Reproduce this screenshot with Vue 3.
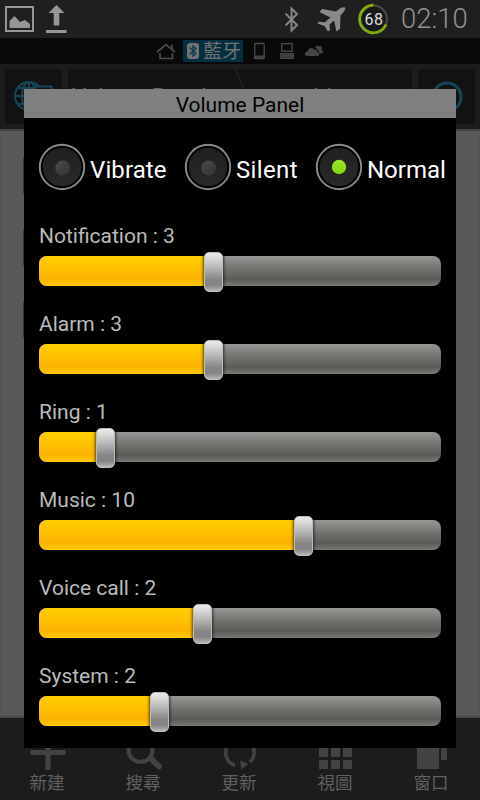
<script setup>
const modes = [
  { name: 'Vibrate', on: false },
  { name: 'Silent', on: false },
  { name: 'Normal', on: true }
]
const sliders = [
  { name: 'Notification', value: 3, pos: 174.5 },
  { name: 'Alarm', value: 3, pos: 174.5 },
  { name: 'Ring', value: 1, pos: 66.5 },
  { name: 'Music', value: 10, pos: 264.5 },
  { name: 'Voice call', value: 2, pos: 163.5 },
  { name: 'System', value: 2, pos: 120.5 }
]
</script>

<template>
  <div class="screen">
    <header class="status">
      <svg class="status-left" width="72" height="38" viewBox="0 0 72 38">
        <rect x="6" y="7" width="27" height="24" fill="none" stroke="#969696" stroke-width="2" />
        <path d="M9.500 28V21L14.500 16L20 22L25 20L30 24V28Z" fill="#969696" />
        <path d="M56.500 5L64.500 13H59.300V25.500H53.700V13H48.500Z" fill="#969696" />
        <rect x="46" y="30" width="20.500" height="3" fill="#969696" />
      </svg>
      <div class="status-right">
        <svg width="72" height="38" viewBox="280 0 72 38">
          <path d="M285.500 13.500L297 25L291.500 30.500V8.500L297 14L285.500 25.500" fill="none" stroke="#858585" stroke-width="2" />
          <path d="M345 7.500C343 6.500 340 8 336 11.500L322 9L319.500 12L330.500 17.500L324.500 22.500L319 21.500L317.500 23.500L324.500 26L328 31.500L330 30L329.500 24.500L334 20.500L336.500 31.500L340 29L340.500 15.500C344 12 346 9 345 7.500Z" fill="#8a8a8a" />
        </svg>
        <div class="battery">
          <svg width="32" height="38" viewBox="357 0 32 38">
            <circle cx="373.300" cy="19" r="13.600" fill="#191919" stroke="#4b4b50" stroke-width="2" />
            <path d="M373.500 5.200A13.800 13.800 0 1 0 386.100 24.500" fill="none" stroke="#80ad0c" stroke-width="2.800" />
          </svg>
          <span>68</span>
        </div>
        <time>02:10</time>
      </div>
    </header>

    <nav class="tabs">
      <svg width="20" height="26" viewBox="156 38 20 26">
        <path d="M157 52L166 44.500L175 52M172 49V44.500M160 53V58.500H172.500V53" fill="none" stroke="#4c4c4c" stroke-width="1.700" />
      </svg>
      <div class="tab-active">
        <svg width="12" height="16" viewBox="0 0 12 16">
          <rect width="12" height="16" rx="3" fill="#727272" />
          <path d="M2.500 4.500L9 10.500L6 13V3L9 5.500L2.500 11.500" fill="none" stroke="#04394d" stroke-width="1.200" />
        </svg>
        <span>藍牙</span>
      </div>
      <svg class="tab-devices" width="74" height="26" viewBox="252 38 74 26">
        <g fill="none" stroke="#4c4c4c" stroke-width="1.300">
          <rect x="254.700" y="43.500" width="9.500" height="15" rx="1" />
          <rect x="281.700" y="43.700" width="10.500" height="7.500" />
        </g>
        <path d="M254 55.500H265V59H254ZM280 53H294V59H280Z" fill="#454545" />
        <path d="M258.500 57.300H260.500M281.500 54.700H292.500M281.500 57.200H292.500" stroke="#252525" stroke-width="1" stroke-dasharray="1.500 1" />
        <path d="M307 56C304 56 304 52 307.500 51.500C308 48 312 47 314 49.500C318 49 317 53 319.500 53C319.500 56 318 56 316 56Z" fill="#454545" />
        <path d="M315.500 48C315 45.500 318 45 319 46.500C321 45 323 48 321.500 49.500C324 51.500 323 54 321 53.500C319 54 319 52 318 50Z" fill="#454545" />
      </svg>
    </nav>

    <div class="toolbar">
      <div class="tile">
        <svg width="57" height="55" viewBox="5 69 57 55">
          <g fill="none" stroke="#174657" stroke-width="2">
            <circle cx="29" cy="96" r="14" />
            <ellipse cx="29" cy="96" rx="7" ry="14" />
            <path d="M29 82V110M15 96H43M18 88H40M18 104H40" />
            <rect x="35" y="86.500" width="16.500" height="14" fill="#121212" />
          </g>
        </svg>
      </div>
      <div class="crumbs">
        <span>Volume Panel</span>
        <svg width="24" height="55" viewBox="0 0 24 55"><path d="M1 0L14 28L1 55" fill="none" stroke="#1e1e1e" stroke-width="2" /></svg>
        <span class="crumb-last">enable</span>
      </div>
      <div class="tile">
        <svg width="57" height="55" viewBox="418 69 57 55"><circle cx="447" cy="97" r="14" fill="none" stroke="#174657" stroke-width="3" /></svg>
      </div>
    </div>

    <main class="content">
      <i v-for="n in 3" :key="n" class="item"></i>
    </main>

    <footer class="actions">
      <div class="action">
        <svg width="40" height="34" viewBox="0 0 40 34"><path d="M20 0V34M2.500 16.500H37.500" stroke="#434343" stroke-width="5" /></svg>
        <span>新建</span>
      </div>
      <div class="action">
        <svg width="40" height="34" viewBox="0 0 40 34"><circle cx="16.500" cy="14" r="12" fill="none" stroke="#434343" stroke-width="4" /><path d="M27.500 23L35 30.500" stroke="#434343" stroke-width="6" stroke-linecap="round" /></svg>
        <span>搜尋</span>
      </div>
      <div class="action">
        <svg width="40" height="34" viewBox="0 0 40 34"><path d="M15 29.500A14 14 0 0 1 15 3M25 3A14 14 0 0 1 30 26" fill="none" stroke="#434343" stroke-width="3.500" /><path d="M20 24.500L28 28L21.500 33.500ZM19 -1L12 3L19 8Z" fill="#434343" /></svg>
        <span>更新</span>
      </div>
      <div class="action">
        <svg width="40" height="34" viewBox="0 0 40 34"><path d="M3 0H12V9H3ZM15 0H24V9H15ZM27 0H36V9H27ZM3 12H12V21H3ZM15 12H24V21H15ZM27 12H36V21H27ZM3 24H12V33H3ZM15 24H24V33H15ZM27 24H36V33H27Z" fill="#434343" /></svg>
        <span>視圖</span>
      </div>
      <div class="action">
        <svg width="40" height="34" viewBox="0 0 40 34"><path d="M5 4H27V33H5ZM29 0H35V24H29Z" fill="#434343" /></svg>
        <span>窗口</span>
      </div>
    </footer>

    <section class="dialog">
      <h1>Volume Panel</h1>
      <div class="modes">
        <label v-for="m in modes" :key="m.name" class="mode">
          <svg width="48" height="48" viewBox="0 0 48 48">
            <defs>
              <linearGradient id="face" x1="0" y1="0" x2="0" y2="1"><stop offset="0" stop-color="#202020" /><stop offset="1" stop-color="#292929" /></linearGradient>
              <linearGradient id="dot" x1="0" y1="0" x2="1" y2="1"><stop offset="0" stop-color="#4c4c4c" /><stop offset="1" stop-color="#333" /></linearGradient>
              <linearGradient id="lit" x1="0" y1="0" x2="0" y2="1"><stop offset="0" stop-color="#9be52e" /><stop offset="1" stop-color="#82d414" /></linearGradient>
            </defs>
            <circle cx="24" cy="24" r="22.200" fill="#000" stroke="#8b8b8b" stroke-width="1.900" />
            <circle cx="24" cy="24" r="19.300" fill="url(#face)" />
            <circle v-if="m.on" cx="24" cy="24" r="7.200" fill="url(#lit)" />
            <circle v-else cx="24.700" cy="25" r="7.400" fill="url(#dot)" />
          </svg>
          <span>{{ m.name }}</span>
        </label>
      </div>
      <div class="sliders">
        <div v-for="s in sliders" :key="s.name" class="slider">
          <div class="caption">{{ s.name }} : {{ s.value }}</div>
          <div class="track">
            <div class="fill" :style="{ width: s.pos + 'px' }"></div>
            <div class="thumb" :style="{ left: s.pos + 'px' }"></div>
          </div>
        </div>
      </div>
    </section>
  </div>
</template>

<style>
body { background: #1c1c1c; overflow: hidden; }
</style>

<style scoped>
* { box-sizing: border-box; }
svg { display: block; flex: none; }
.screen { position: relative; width: 480px; height: 800px; display: flex; flex-direction: column; font-family: Roboto, "Noto Sans CJK TC", sans-serif; overflow: hidden; }
.status { height: 38px; flex: none; display: flex; justify-content: space-between; background: #1f1f1f; }
.status-right { display: flex; align-items: center; padding-right: 12px; }
.battery { display: grid; margin: 0 12px 0 5px; align-items: center; justify-items: center; }
.battery svg, .battery span { grid-area: 1 / 1; }
.battery span { color: #ddd; font-size: 16px; letter-spacing: 0.6px; padding: 1px 0 0 2px; }
time { color: #929292; font-size: 27.500px; line-height: 38px; width: 67px; white-space: nowrap; font-weight: 300; }
.tabs { height: 26px; flex: none; display: flex; align-items: center; padding-left: 156px; background: #090909; }
.tab-active { height: 22px; width: 60px; margin-left: 7px; padding-left: 4px; display: flex; align-items: center; gap: 4px; background: #032f40; color: #727272; font-size: 19px; line-height: 22px; white-space: nowrap; }
.tab-active span { padding-top: 1px; }
.tab-devices { margin-left: 9px; }
.toolbar { height: 65px; flex: none; display: flex; gap: 6px; padding: 5px 5px 0; background: #1c1c1c; align-items: flex-start; }
.tile { width: 57px; height: 55px; background: #121212; border-radius: 3px; flex: none; }
.crumbs { flex: 1; height: 55px; background: #121212; border-radius: 3px; display: flex; align-items: center; color: #646464; font-size: 22px; overflow: hidden; padding-left: 4px; white-space: nowrap; }
.crumbs > span:first-child { width: 130px; }
.crumbs svg { margin-left: 32px; }
.crumb-last { margin-left: 20px; }
.content { flex: 1; background: #585858; display: flex; flex-direction: column; gap: 35px; padding: 28px 0 0 23px; box-shadow: inset 0 2px 1px #444, inset 0 -2px 1px #484848; }
.item { width: 30px; height: 37px; background: #263a44; border-radius: 2px; }
.actions { height: 82px; flex: none; display: grid; grid-template-columns: repeat(5, 96px); background: #1c1c1c; padding-top: 18px; }
.action { display: flex; flex-direction: column; align-items: center; color: #606060; font-size: 17.500px; line-height: 25px; }
.action span { margin: 1px 2px 0 0; }
.dialog { position: absolute; left: 24px; top: 89px; width: 432px; height: 659px; background: #000; }
h1 { margin: 0; height: 29px; background: #808080; color: #000; font-size: 21px; line-height: 32px; font-weight: 400; text-align: center; }
.modes { height: 106px; padding: 25px 0 0 14px; display: grid; grid-template-columns: 146px 131px 1fr; align-items: start; }
.mode { display: flex; align-items: center; gap: 4px; color: #fff; font-size: 24px; line-height: 28px; white-space: nowrap; }
.mode span { padding-top: 5px; }
.mode:nth-child(2) span { letter-spacing: 0.350px; }
.mode:nth-child(1) span { letter-spacing: 0.100px; }
.sliders { display: flex; flex-direction: column; gap: 26px; padding: 0 15px; }
.slider { display: flex; flex-direction: column; gap: 8px; }
.caption { height: 24px; line-height: 24px; font-size: 21px; color: #bababa; }
.track { position: relative; height: 30px; border-radius: 8px; background: linear-gradient(#969794, #70726e 45%, #5a5c58 76%, #777975); }
.fill { height: 30px; border-radius: 8px 0 0 8px; background: linear-gradient(#ffd000, #ffc000 45%, #ffb300 75%, #ffcb00); }
.thumb { position: absolute; top: -4px; width: 19px; height: 40px; margin-left: -9.500px; border-radius: 5px; border: 1px solid #bcbcbc; background: linear-gradient(#ececec, #bcbcbc 35%, #858585 70%, #858585 85%, #b8b8b8); box-shadow: 0 0 3px 1px rgba(0, 0, 0, 0.650); }
</style>
